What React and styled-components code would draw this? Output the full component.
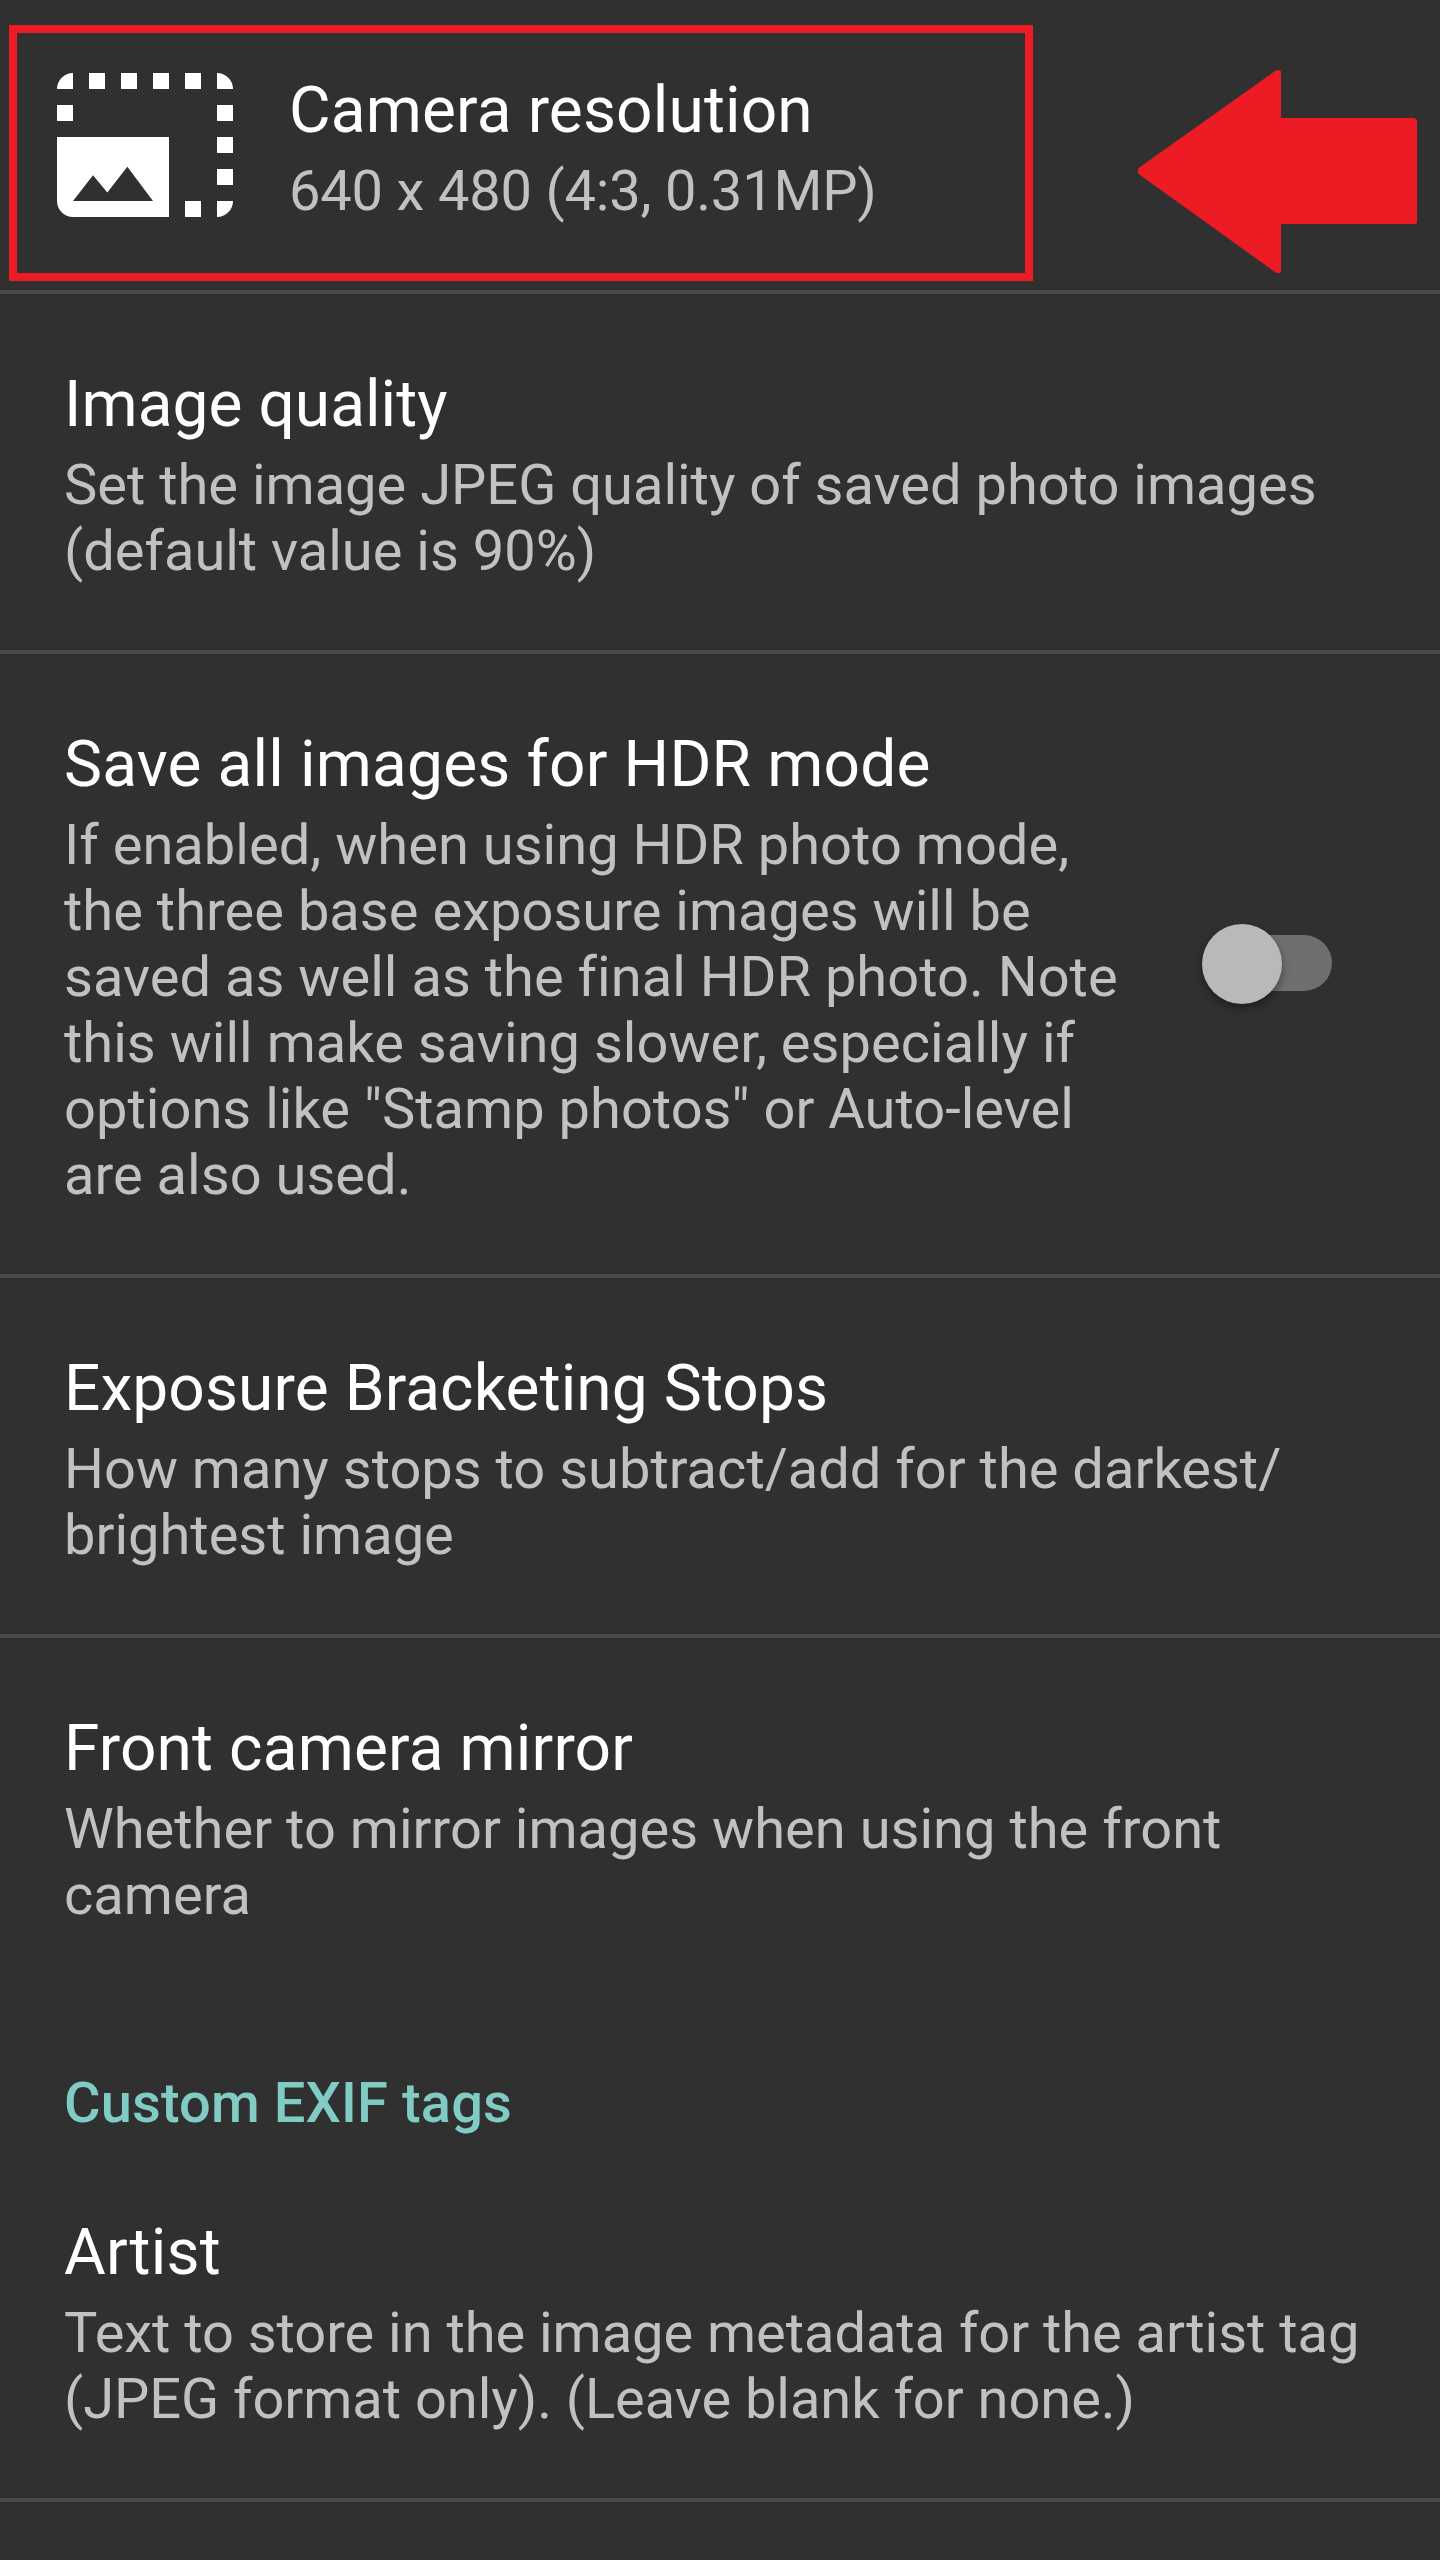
import React from "react";
import styled, { createGlobalStyle } from "styled-components";

const GlobalStyle = createGlobalStyle`
  html, body { margin: 0; background: #303030; }
`;

const Screen = styled.main`
  position: relative;
  width: 1440px;
  height: 2560px;
  overflow: hidden;
  background: #303030;
  font-family: Roboto, "Noto Sans", sans-serif;
`;

const Row = styled.section`
  display: flex;
  align-items: center;
  padding: 72px 108px 66px 64px;
  border-bottom: ${(p) => (p.$last ? "0" : "4px solid #4a4a4a")};
`;

const IconSlot = styled.div`
  display: flex;
  width: 225px;
  margin: -72px 0 -66px;
  svg { display: block; width: 192px; height: 192px; margin-left: -15px; }
`;

const Texts = styled.div`
  display: flex;
  flex: 1;
  flex-direction: column;
  gap: 9px;
  white-space: pre;
`;

const Title = styled.h2`
  margin: 0;
  color: #ffffff;
  font-size: 64px;
  font-weight: 400;
  line-height: 77px;
  letter-spacing: ${(p) => p.$tracking}px;
`;

const Summary = styled.p`
  margin: 0;
  color: #c1c1c1;
  font-size: 56px;
  line-height: 66px;
  letter-spacing: ${(p) => p.$tracking}px;
`;

const Category = styled.h3`
  margin: 0;
  padding: 76px 64px 6px;
  color: #80cbc4;
  font-size: 56px;
  font-weight: 500;
  line-height: 66px;
  letter-spacing: 0.12px;
`;

const Track = styled.div`
  display: flex;
  align-items: center;
  width: 124px;
  height: 56px;
  margin-top: -8px;
  border-radius: 28px;
  background: #6f6f6f;
`;

const Thumb = styled.div`
  flex: none;
  width: 80px;
  height: 80px;
  margin: 2px 0 0 -6px;
  border-radius: 50%;
  background: #b9b9b9;
  box-shadow: 0 4px 8px rgba(0, 0, 0, 0.4);
`;

const Highlight = styled.div`
  position: absolute;
  left: 9px;
  top: 25px;
  box-sizing: border-box;
  width: 1024px;
  height: 256px;
  border: 8px solid #ed1c24;
`;

const Arrow = styled.svg`
  position: absolute;
  left: 1138px;
  top: 70px;
  width: 279px;
  height: 203px;
`;

const ResolutionIcon = () => (
  <svg viewBox="0 0 24 24" fill="#fff">
    <path d="M21 15h2v2h-2v-2zm0-4h2v2h-2v-2zm2 8h-2v2a2 2 0 0 0 2-2zM13 3h2v2h-2V3zm8 4h2v2h-2V7zm0-4v2h2a2 2 0 0 0-2-2zM1 7h2v2H1V7zm16-4h2v2h-2V3zm0 16h2v2h-2v-2zM3 3a2 2 0 0 0-2 2h2V3zm6 0h2v2H9V3zM5 3h2v2H5V3zm-4 8v8c0 1.1.9 2 2 2h12V11H1zm2 8l2.5-3.21 1.79 2.15 2.5-3.22L13 19H3z" />
  </svg>
);

const Preference = ({
  title,
  summary,
  icon,
  toggle,
  last,
  titleTracking = 0.1,
  summaryTracking = 0,
}) => (
  <Row $last={last}>
    {icon && <IconSlot>{icon}</IconSlot>}
    <Texts>
      <Title $tracking={titleTracking}>{title}</Title>
      <Summary $tracking={summaryTracking}>{summary}</Summary>
    </Texts>
    {toggle && (
      <Track role="switch" aria-checked="false">
        <Thumb />
      </Track>
    )}
  </Row>
);

export default function App() {
  return (
    <Screen>
      <GlobalStyle />
      <Preference
        icon={<ResolutionIcon />}
        title="Camera resolution"
        titleTracking={0.14}
        summary="640 x 480 (4:3, 0.31MP)"
        summaryTracking={-0.18}
      />
      <Preference
        title="Image quality"
        titleTracking={0.05}
        summary={"Set the image JPEG quality of saved photo images\n(default value is 90%)"}
      />
      <Preference
        toggle
        title="Save all images for HDR mode"
        titleTracking={0.17}
        summary={
          "If enabled, when using HDR photo mode,\nthe three base exposure images will be\nsaved as well as the final HDR photo. Note\nthis will make saving slower, especially if\noptions like \"Stamp photos\" or Auto-level\nare also used."
        }
        summaryTracking={0.025}
      />
      <Preference
        title="Exposure Bracketing Stops"
        summary={"How many stops to subtract/add for the darkest/\nbrightest image"}
      />
      <Preference
        last
        title="Front camera mirror"
        titleTracking={0.14}
        summary={"Whether to mirror images when using the front\ncamera"}
        summaryTracking={0.02}
      />
      <Category>Custom EXIF tags</Category>
      <Preference
        title="Artist"
        titleTracking={0.25}
        summary={"Text to store in the image metadata for the artist tag\n(JPEG format only). (Leave blank for none.)"}
        summaryTracking={-0.04}
      />
      <Highlight />
      <Arrow viewBox="0 0 279 203" fill="#ed1c24">
        <path d="M0 99Q0 98 2 97L137 1Q138 0 140 0Q143 0 143 2V48H274Q279 48 279 51V152Q279 154 277 154H143V201Q143 203 140 203Q138 203 137 202L2 105Q0 104 0 102Z" />
      </Arrow>
    </Screen>
  );
}
